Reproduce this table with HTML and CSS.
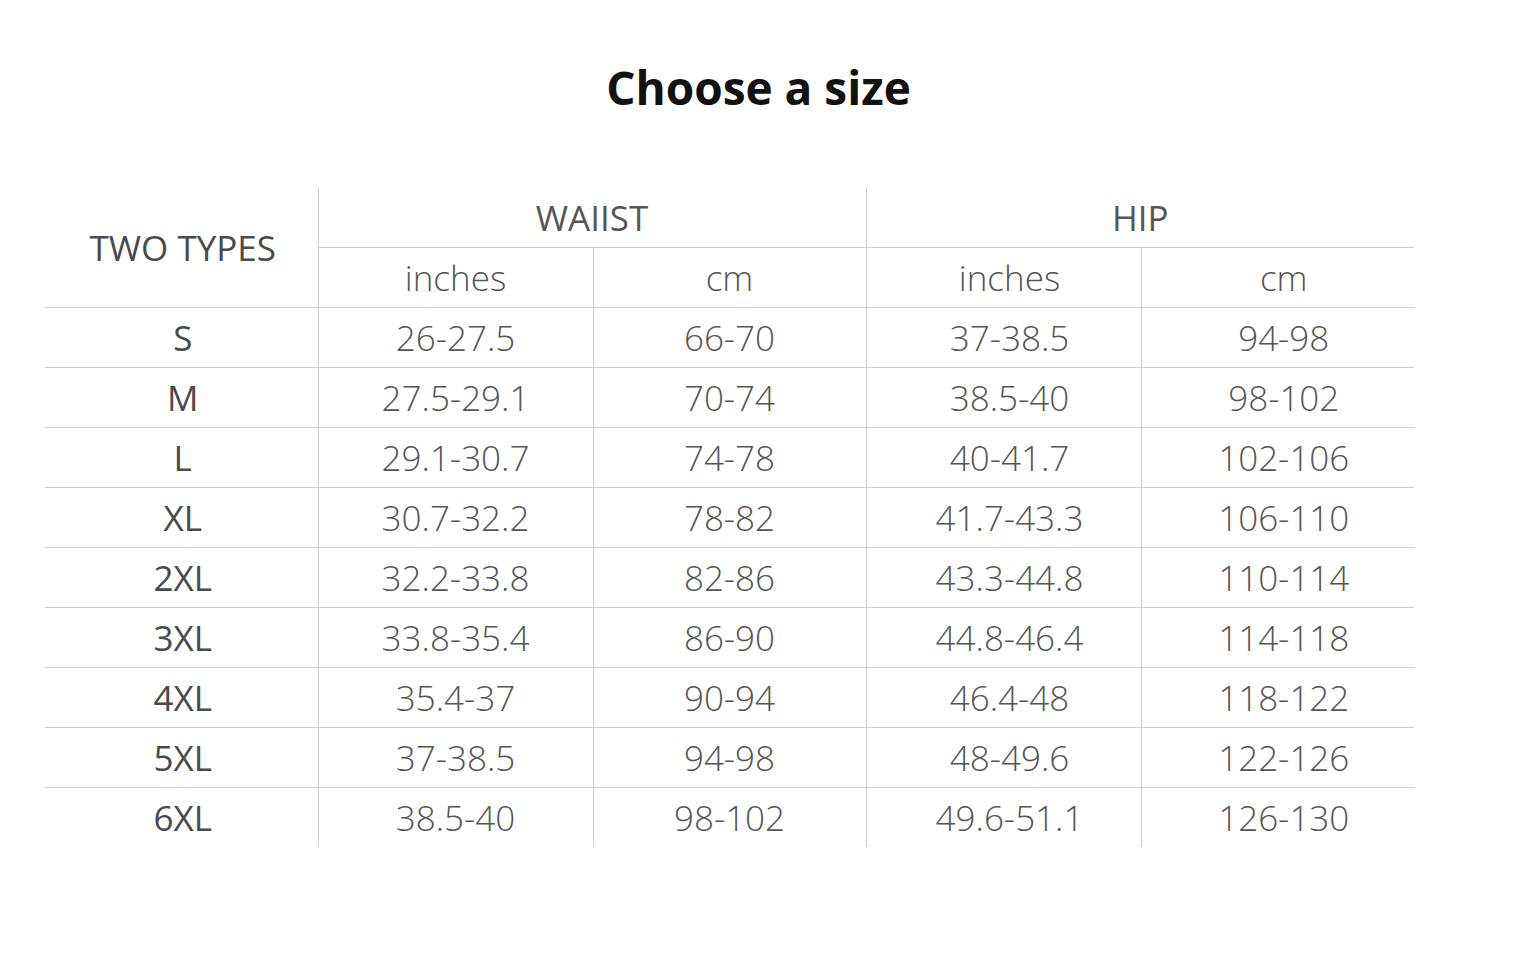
FILE: index.html
```html
<!DOCTYPE html>
<html lang="en">
<head>
<meta charset="utf-8">
<title>Choose a size</title>
<link rel="stylesheet" href="styles.css">
</head>
<body>
<h1 class="title">Choose a size</h1>
<div class="wrap">
<table class="chart">
  <colgroup>
    <col class="c1"><col class="c2"><col class="c3"><col class="c4"><col class="c5">
  </colgroup>
  <thead>
    <tr class="h1">
      <th rowspan="2" class="type">TWO TYPES</th>
      <th colspan="2" class="grp">WAIIST</th>
      <th colspan="2" class="grp">HIP</th>
    </tr>
    <tr class="h2">
      <th>inches</th><th>cm</th><th class="hip">inches</th><th class="hip">cm</th>
    </tr>
  </thead>
  <tbody>
    <tr><td class="sz">S</td><td>26-27.5</td><td>66-70</td><td class="hip">37-38.5</td><td class="hip">94-98</td></tr>
    <tr><td class="sz">M</td><td>27.5-29.1</td><td>70-74</td><td class="hip">38.5-40</td><td class="hip">98-102</td></tr>
    <tr><td class="sz">L</td><td>29.1-30.7</td><td>74-78</td><td class="hip">40-41.7</td><td class="hip">102-106</td></tr>
    <tr><td class="sz">XL</td><td>30.7-32.2</td><td>78-82</td><td class="hip">41.7-43.3</td><td class="hip">106-110</td></tr>
    <tr><td class="sz">2XL</td><td>32.2-33.8</td><td>82-86</td><td class="hip">43.3-44.8</td><td class="hip">110-114</td></tr>
    <tr><td class="sz">3XL</td><td>33.8-35.4</td><td>86-90</td><td class="hip">44.8-46.4</td><td class="hip">114-118</td></tr>
    <tr><td class="sz">4XL</td><td>35.4-37</td><td>90-94</td><td class="hip">46.4-48</td><td class="hip">118-122</td></tr>
    <tr><td class="sz">5XL</td><td>37-38.5</td><td>94-98</td><td class="hip">48-49.6</td><td class="hip">122-126</td></tr>
    <tr><td class="sz">6XL</td><td>38.5-40</td><td>98-102</td><td class="hip">49.6-51.1</td><td class="hip">126-130</td></tr>
  </tbody>
</table>
</div>
</body>
</html>
```

FILE: styles.css
```css
html, body {
  margin: 0;
  padding: 0;
  background: #ffffff;
}
body {
  font-family: "Open Sans", "Noto Sans", sans-serif;
  width: 1517px;
  height: 973px;
  overflow: hidden;
}
.title {
  margin: 0;
  padding-top: 57px;
  height: 60px;
  line-height: 60px;
  text-align: center;
  font-size: 46px;
  font-weight: 700;
  color: #111111;
}
.wrap {
  padding-left: 45px;
  margin-top: 71px;
}
.chart {
  border-collapse: collapse;
  table-layout: fixed;
  width: 1369px;
}
.c1 { width: 273px; }
.c2 { width: 275px; }
.c3 { width: 273px; }
.c4 { width: 275px; }
.c5 { width: 273px; }
.chart th,
.chart td {
  padding: 0;
  height: 59px;
  text-align: center;
  vertical-align: middle;
  font-size: 35px;
  line-height: 1;
  font-weight: 300;
  color: #555555;
  border-left: 1px solid #cfcfcf;
  border-bottom: 1px solid #cfcfcf;
}
.chart th.hip,
.chart td.hip {
  padding-left: 12px;
}
.chart th.type,
.chart td.sz {
  border-left: none;
  font-weight: 400;
  color: #4a4a4a;
  padding-left: 3px;
}
.chart th.grp {
  font-weight: 400;
  color: #555555;
}
.chart tbody tr:last-child td {
  border-bottom: none;
}
```
